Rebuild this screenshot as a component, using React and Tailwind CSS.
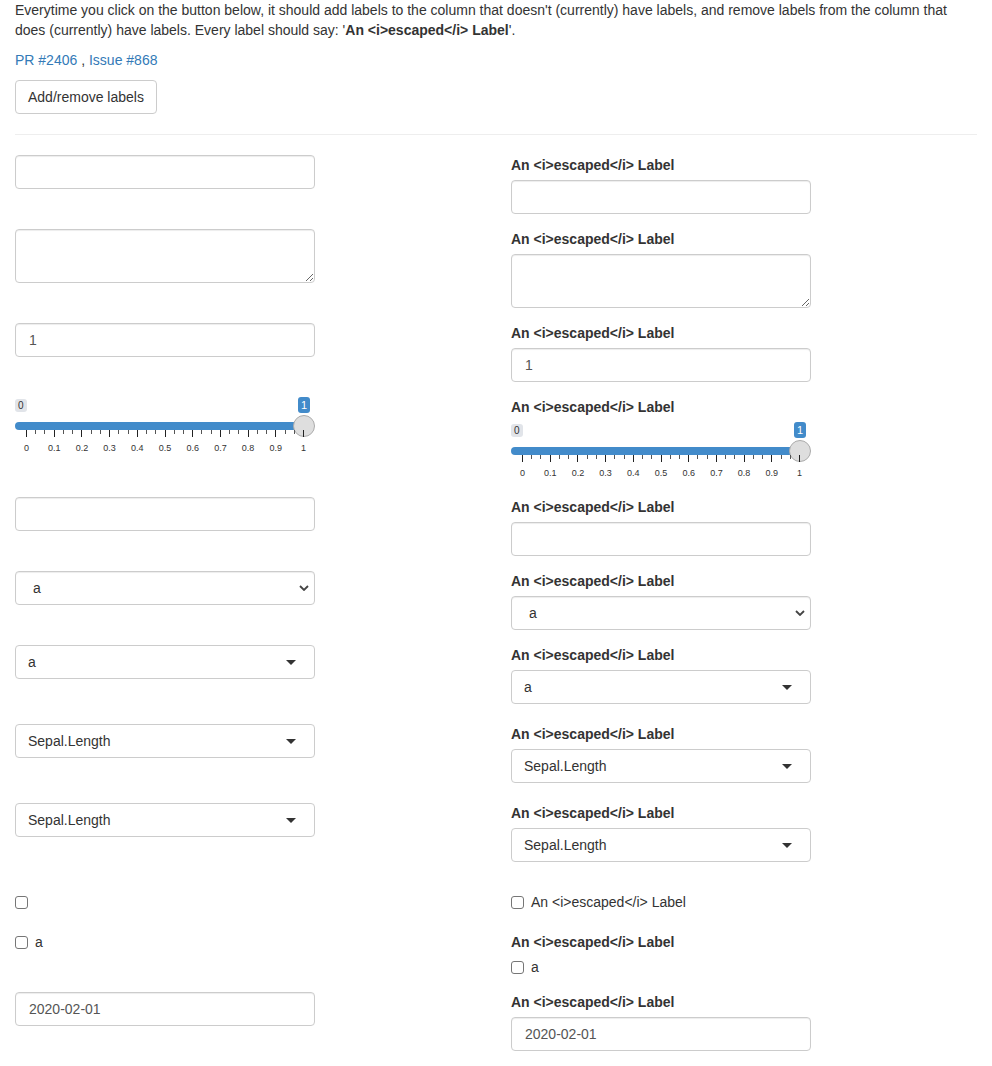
const LABEL = "An <i>escaped</i> Label";

const boxCls =
  "w-[300px] h-[34px] border border-[#ccc] rounded-[4px] bg-white shadow-[inset_0_1px_1px_rgba(0,0,0,0.075)] flex items-center text-sm";

function Label() {
  return <div className="h-5 leading-5 mb-[5px] font-bold text-[#333]">{LABEL}</div>;
}

function TextBox({ value = "" }) {
  return <div className={`${boxCls} px-[13px] text-[#555]`}>{value}</div>;
}

function TextArea() {
  return (
    <textarea
      readOnly
      className="block w-[300px] h-[54px] border border-[#ccc] rounded-[4px] bg-white shadow-[inset_0_1px_1px_rgba(0,0,0,0.075)] resize-y outline-none"
    />
  );
}

function NativeSelect() {
  return (
    <div className={`${boxCls} pl-[17px] pr-[5px] justify-between text-[#333]`}>
      <span>a</span>
      <svg width="10" height="6" viewBox="0 0 10 6">
        <path d="M1 1l4 4 4-4" stroke="#444" strokeWidth="1.8" fill="none" />
      </svg>
    </div>
  );
}

function Selectize({ value }) {
  return (
    <div className={`${boxCls} pl-[12px] pr-[18px] justify-between text-[#333] shadow-none`}>
      <span>{value}</span>
      <span className="w-0 h-0 border-x-[5px] border-x-transparent border-t-[5px] border-t-[#333]" />
    </div>
  );
}

function Check({ text }) {
  return (
    <div className="h-5 flex items-center gap-[7px] text-[#333]">
      <span className="w-[13px] h-[13px] border border-[#767676] rounded-[3px] bg-white" />
      {text && <span>{text}</span>}
    </div>
  );
}

function Slider() {
  const step = 27.7;
  const majors = Array.from({ length: 11 }, (_, i) => i);
  const minors = [];
  for (let i = 0; i < 10; i++) {
    minors.push(11 + i * step + step / 3, 11 + i * step + (2 * step) / 3);
  }
  return (
    <div className="relative w-[300px] h-[60px]">
      <span className="absolute left-0 top-[2px] bg-[#e1e4e9] text-[#333] text-[10px] leading-[13px] px-[3px] rounded-[3px]">0</span>
      <span className="absolute left-[283px] top-0 bg-[#428bca] text-white text-[11px] leading-[16px] px-[3px] rounded-[3px]">1</span>
      <div className="absolute left-0 top-[25px] w-[292px] h-[8px] rounded-full bg-[#428bca]" />
      <div className="absolute left-[278px] top-[18px] w-[22px] h-[22px] rounded-full bg-[#dedede] border border-[#ababab]" />
      {majors.map((i) => (
        <div key={"M" + i} className="absolute top-[33px] w-px h-[7px] bg-[#222]" style={{ left: 11 + i * step }} />
      ))}
      {minors.map((x, i) => (
        <div key={"m" + i} className="absolute top-[33px] w-px h-[4px] bg-[#555]" style={{ left: x }} />
      ))}
      {majors.map((i) => (
        <span
          key={"t" + i}
          className="absolute top-[45px] -translate-x-1/2 text-[9px] leading-[12px] text-[#333]"
          style={{ left: 11.5 + i * step }}
        >
          {i === 0 ? "0" : i === 10 ? "1" : "0." + i}
        </span>
      ))}
    </div>
  );
}

function Row({ left, right, mb = "mb-[15px]" }) {
  return (
    <div className="grid grid-cols-2 gap-x-[30px]">
      <div className={mb}>{left}</div>
      <div className={mb}>{right}</div>
    </div>
  );
}

export default function App() {
  return (
    <div className="px-[15px] text-sm leading-5 text-[#333] bg-white min-h-[1066px]" style={{ fontFamily: '"Liberation Sans", Arial, sans-serif' }}>
      <p className="mb-[10px]">
        Everytime you click on the button below, it should add labels to the column that doesn't (currently) have labels, and remove labels from the column that
        <br />
        does (currently) have labels. Every label should say: '<b>{LABEL}</b>'.
      </p>
      <p className="mb-[10px]">
        <a className="text-[#337ab7]">PR #2406</a> , <a className="text-[#337ab7]">Issue #868</a>
      </p>
      <button className="h-[34px] px-3 border border-[#ccc] rounded-[4px] bg-white text-[#333]">Add/remove labels</button>
      <hr className="mt-5 mb-5 border-0 border-t border-[#eee]" />

      <Row left={<TextBox />} right={<><Label /><TextBox /></>} />
      <Row left={<TextArea />} right={<><Label /><TextArea /></>} />
      <Row left={<TextBox value="1" />} right={<><Label /><TextBox value="1" /></>} />
      <Row left={<Slider />} right={<><Label /><Slider /></>} />
      <Row left={<TextBox />} right={<><Label /><TextBox /></>} />
      <Row left={<NativeSelect />} right={<><Label /><NativeSelect /></>} />
      <Row mb="mb-[20px]" left={<Selectize value="a" />} right={<><Label /><Selectize value="a" /></>} />
      <Row mb="mb-[20px]" left={<Selectize value="Sepal.Length" />} right={<><Label /><Selectize value="Sepal.Length" /></>} />
      <Row mb="mb-[20px]" left={<Selectize value="Sepal.Length" />} right={<><Label /><Selectize value="Sepal.Length" /></>} />

      <div className="grid grid-cols-2 gap-x-[30px] pt-[10px] pb-[20px]">
        <Check />
        <Check text={LABEL} />
      </div>
      <Row left={<Check text="a" />} right={<><Label /><Check text="a" /></>} />
      <Row left={<TextBox value="2020-02-01" />} right={<><Label /><TextBox value="2020-02-01" /></>} />
    </div>
  );
}
